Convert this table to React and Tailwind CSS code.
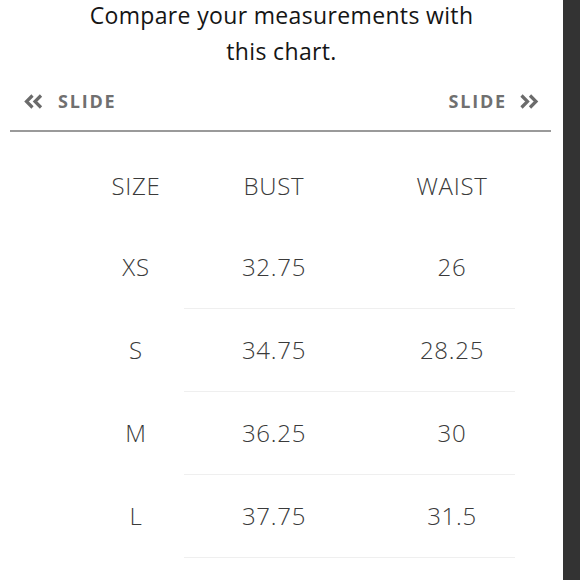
import React from 'react';

const rows = [
  { size: 'XS', bust: '32.75', waist: '26' },
  { size: 'S', bust: '34.75', waist: '28.25' },
  { size: 'M', bust: '36.25', waist: '30' },
  { size: 'L', bust: '37.75', waist: '31.5' },
];

function Chevrons({ dir }) {
  const d = dir === 'left'
    ? 'M8.5 1.5 L2.5 7.5 L8.5 13.5 M17 1.5 L11 7.5 L17 13.5'
    : 'M2.5 1.5 L8.5 7.5 L2.5 13.5 M11 1.5 L17 7.5 L11 13.5';
  return (
    <svg width="20" height="15" viewBox="0 0 20 15" fill="none">
      <path d={d} stroke="#6b6b6b" strokeWidth="3.2" strokeLinecap="butt" strokeLinejoin="miter" />
    </svg>
  );
}

export default function App() {
  return (
    <div className="w-[580px] h-[580px] overflow-hidden flex bg-white font-['Open_Sans',sans-serif]">
      <div className="w-[563px] flex flex-col">
        {/* Heading */}
        <div className="-mt-[3px] text-center text-[23px] leading-[36px] tracking-[0.015em] text-[#151515]">
          <p>Compare your measurements with</p>
          <p>this chart.</p>
        </div>

        {/* Slide hints */}
        <div className="mt-[17px] h-[30px] flex items-center justify-between pl-[24px] pr-[24px] text-[#707070] font-bold text-[18px] tracking-[0.1em]">
          <div className="flex items-center gap-[14px]">
            <Chevrons dir="left" />
            <span>SLIDE</span>
          </div>
          <div className="flex items-center gap-[12px]">
            <span>SLIDE</span>
            <Chevrons dir="right" />
          </div>
        </div>

        <div className="mt-[14px] ml-[10px] w-[541px] h-[2px] bg-[#9a9a9a]" />

        {/* Table */}
        <div className="mt-[14px] text-[24px] font-light tracking-[0.03em] text-[#3a3a3a]">
          <div className="h-[80px] flex items-center">
            <div className="w-[184px] pl-[88px] text-center">SIZE</div>
            <div className="w-[180px] text-center">BUST</div>
            <div className="w-[176px] text-center">WAIST</div>
          </div>
          {rows.map((r) => (
            <div key={r.size} className="flex">
              <div className="w-[184px] pl-[88px] h-[82px] flex items-center justify-center">{r.size}</div>
              <div className="w-[331px] flex border-b border-[#efefef]">
                <div className="w-[180px] h-[82px] flex items-center justify-center">{r.bust}</div>
                <div className="w-[176px] -mr-[25px] h-[82px] flex items-center justify-center">{r.waist}</div>
              </div>
            </div>
          ))}
        </div>
      </div>
      <div className="flex-1 bg-[#333]" />
    </div>
  );
}
